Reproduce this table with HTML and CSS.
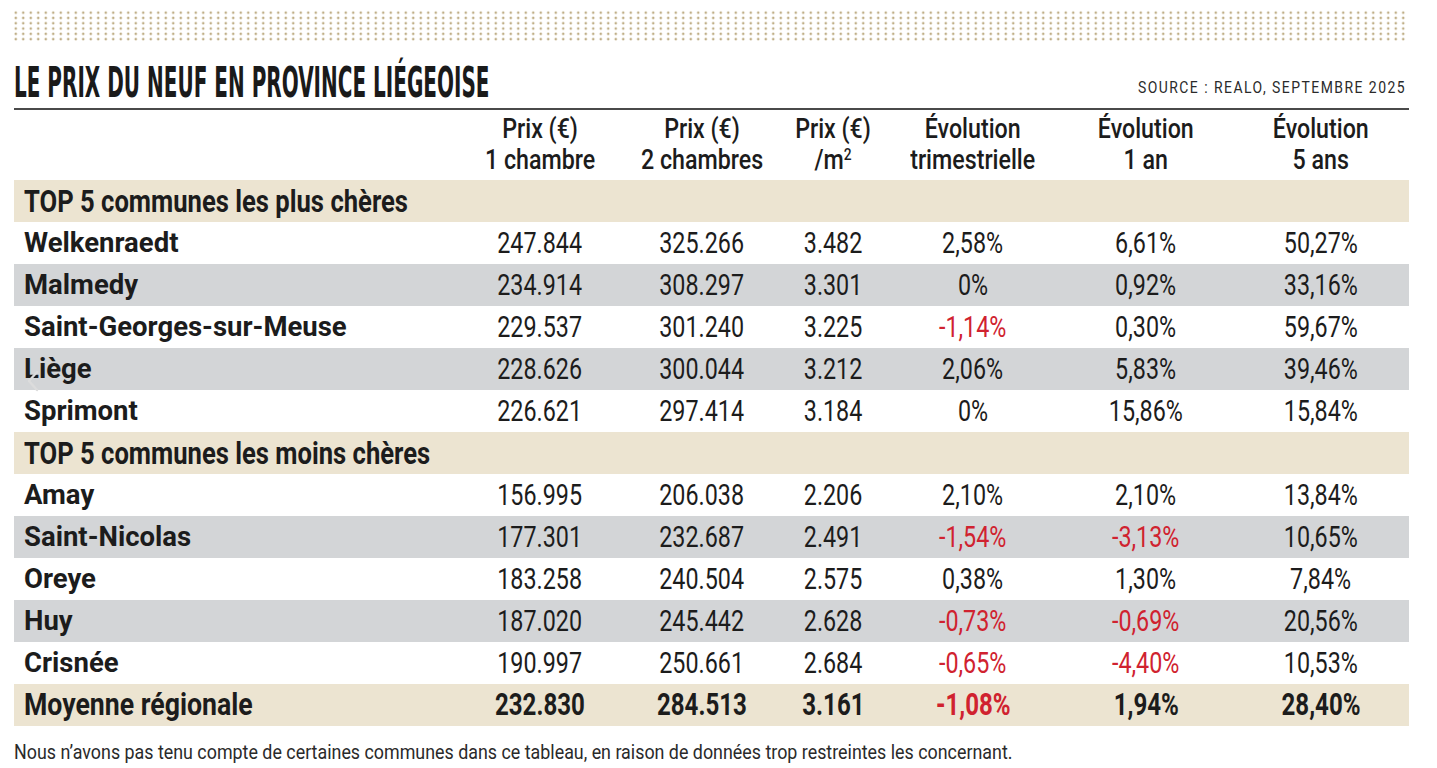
FILE: index.html
```html
<!DOCTYPE html>
<html lang="fr">
<head>
<meta charset="utf-8">
<title>Le prix du neuf en province liégeoise</title>
<link rel="stylesheet" href="styles.css">
</head>
<body>
<div class="page">
  <div class="dots"></div>
  <div class="head">
    <h1 class="title"><span>LE PRIX DU NEUF EN PROVINCE LIÉGEOISE</span></h1>
    <div class="source"><span>SOURCE : REALO, SEPTEMBRE 2025</span></div>
  </div>
  <div class="table-wrap">
    <table class="prices">
      <colgroup>
        <col class="c-name"><col class="c1"><col class="c2"><col class="c3"><col class="c4"><col class="c5"><col class="c6">
      </colgroup>
      <thead>
        <tr>
          <th></th>
          <th><span>Prix (€)<br>1 chambre</span></th>
          <th><span>Prix (€)<br>2 chambres</span></th>
          <th><span>Prix (€)<br>/m<sup>2</sup></span></th>
          <th><span>Évolution<br>trimestrielle</span></th>
          <th><span>Évolution<br>1 an</span></th>
          <th><span>Évolution<br>5 ans</span></th>
        </tr>
      </thead>
      <tbody>
        <tr class="section"><td colspan="7"><span>TOP 5 communes les plus chères</span></td></tr>
        <tr><td>Welkenraedt</td><td><span>247.844</span></td><td><span>325.266</span></td><td><span>3.482</span></td><td><span>2,58%</span></td><td><span>6,61%</span></td><td><span>50,27%</span></td></tr>
        <tr class="alt"><td>Malmedy</td><td><span>234.914</span></td><td><span>308.297</span></td><td><span>3.301</span></td><td><span>0%</span></td><td><span>0,92%</span></td><td><span>33,16%</span></td></tr>
        <tr><td>Saint-Georges-sur-Meuse</td><td><span>229.537</span></td><td><span>301.240</span></td><td><span>3.225</span></td><td class="neg"><span>-1,14%</span></td><td><span>0,30%</span></td><td><span>59,67%</span></td></tr>
        <tr class="alt"><td>Liège</td><td><span>228.626</span></td><td><span>300.044</span></td><td><span>3.212</span></td><td><span>2,06%</span></td><td><span>5,83%</span></td><td><span>39,46%</span></td></tr>
        <tr><td>Sprimont</td><td><span>226.621</span></td><td><span>297.414</span></td><td><span>3.184</span></td><td><span>0%</span></td><td><span>15,86%</span></td><td><span>15,84%</span></td></tr>
        <tr class="section"><td colspan="7"><span>TOP 5 communes les moins chères</span></td></tr>
        <tr><td>Amay</td><td><span>156.995</span></td><td><span>206.038</span></td><td><span>2.206</span></td><td><span>2,10%</span></td><td><span>2,10%</span></td><td><span>13,84%</span></td></tr>
        <tr class="alt"><td>Saint-Nicolas</td><td><span>177.301</span></td><td><span>232.687</span></td><td><span>2.491</span></td><td class="neg"><span>-1,54%</span></td><td class="neg"><span>-3,13%</span></td><td><span>10,65%</span></td></tr>
        <tr><td>Oreye</td><td><span>183.258</span></td><td><span>240.504</span></td><td><span>2.575</span></td><td><span>0,38%</span></td><td><span>1,30%</span></td><td><span>7,84%</span></td></tr>
        <tr class="alt"><td>Huy</td><td><span>187.020</span></td><td><span>245.442</span></td><td><span>2.628</span></td><td class="neg"><span>-0,73%</span></td><td class="neg"><span>-0,69%</span></td><td><span>20,56%</span></td></tr>
        <tr><td>Crisnée</td><td><span>190.997</span></td><td><span>250.661</span></td><td><span>2.684</span></td><td class="neg"><span>-0,65%</span></td><td class="neg"><span>-4,40%</span></td><td><span>10,53%</span></td></tr>
        <tr class="total"><td><span>Moyenne régionale</span></td><td><span>232.830</span></td><td><span>284.513</span></td><td><span>3.161</span></td><td class="neg"><span>-1,08%</span></td><td><span>1,94%</span></td><td><span>28,40%</span></td></tr>
      </tbody>
    </table>
    <svg class="nav-arrow" width="14" height="24" viewBox="0 0 14 24" aria-hidden="true"><path d="M11 3 L3 12 L11 21" fill="none" stroke="#dcdcdc" stroke-width="2.4" stroke-linecap="round" stroke-linejoin="round"/></svg>
  </div>
  <p class="note"><span>Nous n’avons pas tenu compte de certaines communes dans ce tableau, en raison de données trop restreintes les concernant.</span></p>
</div>
</body>
</html>
```

FILE: styles.css
```css
html, body {
  margin: 0;
  padding: 0;
  background: #ffffff;
}

body {
  color: #1c1c1c;
  font-family: Roboto, "Liberation Sans", sans-serif;
}

.page {
  width: 1395px;
  padding: 10px 0 0 14px;
}

.dots {
  width: 1393px;
  height: 32px;
  background-image: radial-gradient(circle, #bfae86 1px, rgba(255,255,255,0) 1.6px);
  background-size: 7.5px 5.3px;
  background-position: -2px 0;
}

.head {
  display: flex;
  justify-content: space-between;
  align-items: flex-end;
  height: 66px;
  border-bottom: 2px solid #4a4a4a;
}

.title {
  margin: 0 0 4px 0;
  font-family: "DejaVu Sans Condensed", "DejaVu Sans", sans-serif;
  font-weight: 700;
  font-size: 43px;
  line-height: 44px;
  white-space: nowrap;
  width: 480px;
  color: #1a1a1a;
}

.title span {
  display: inline-block;
  transform: scaleX(0.517);
  transform-origin: left center;
}

.source {
  font-size: 17px;
  letter-spacing: 1.8px;
  margin: 0 3px 11px 0;
  color: #2a2a2a;
  white-space: nowrap;
}

.source span {
  display: inline-block;
  transform: scaleX(0.82);
  transform-origin: right center;
}

.table-wrap {
  position: relative;
}

.prices {
  width: 1395px;
  border-collapse: collapse;
  table-layout: fixed;
}

.c-name { width: 441px; }
.c1 { width: 170px; }
.c2 { width: 154px; }
.c3 { width: 108px; }
.c4 { width: 172px; }
.c5 { width: 174px; }
.c6 { width: 176px; }

.prices th {
  height: 70px;
  padding: 0;
  font-weight: 500;
  font-size: 27px;
  line-height: 31px;
  text-align: center;
  vertical-align: middle;
  white-space: nowrap;
}

.prices th span {
  display: inline-block;
  transform: scaleX(0.86);
  transform-origin: center;
}

.prices th sup {
  font-size: 16px;
  line-height: 0;
  vertical-align: 9px;
}

.prices td {
  height: 42px;
  padding: 0;
  text-align: center;
  font-size: 29.5px;
  line-height: 42px;
  white-space: nowrap;
}

.prices td span {
  display: inline-block;
  transform: scaleX(0.79);
  transform-origin: center;
}

.prices td:first-child {
  text-align: left;
  padding-left: 10px;
  font-weight: 700;
  font-size: 27.5px;
}

.prices tr.alt td {
  background: #d3d5d7;
}

.prices tr.section td,
.prices tr.total td {
  background: #ece4d1;
  font-weight: 700;
  font-size: 30.5px;
}

.prices tr.section td {
  font-size: 32px;
}

.prices tr.section td span {
  transform: scaleX(0.80);
  transform-origin: left center;
}

.prices tr.total td:first-child {
  font-size: 31px;
}

.prices tr.total td:first-child span {
  transform: scaleX(0.86);
  transform-origin: left center;
}

.prices td.neg {
  color: #d0222f;
}

.nav-arrow {
  position: absolute;
  left: 12px;
  top: 259px;
}

.note {
  margin: 14px 0 0 0;
  font-size: 20px;
  line-height: 24px;
  color: #2a2a2a;
  white-space: nowrap;
}

.note span {
  display: inline-block;
  transform: scaleX(0.893);
  transform-origin: left center;
}
```
